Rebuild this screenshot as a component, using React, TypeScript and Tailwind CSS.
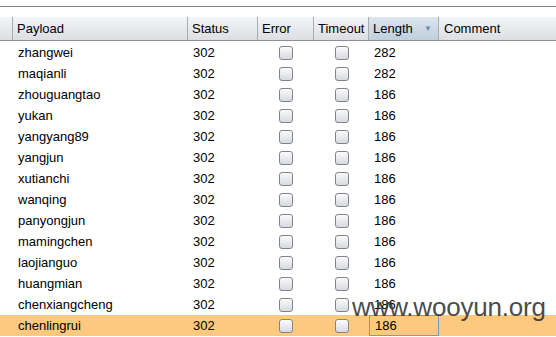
const rows: [string, string][] = [
  ['zhangwei', '282'],
  ['maqianli', '282'],
  ['zhouguangtao', '186'],
  ['yukan', '186'],
  ['yangyang89', '186'],
  ['yangjun', '186'],
  ['xutianchi', '186'],
  ['wanqing', '186'],
  ['panyongjun', '186'],
  ['mamingchen', '186'],
  ['laojianguo', '186'],
  ['huangmian', '186'],
  ['chenxiangcheng', '186'],
  ['chenlingrui', '186'],
];

function Box() {
  return (
    <span className="block w-[14px] h-[14px] rounded-[3px] border border-[#7f848b] bg-gradient-to-b from-[#fbfbfb] to-[#d8dadf]" />
  );
}

export default function App() {
  return (
    <div className="relative w-[556px] h-[337px] overflow-hidden bg-white text-[13px] text-black font-['Liberation_Sans',Arial,sans-serif]">
      <div className="h-[6px]" />
      <div className="h-px bg-[#808080]" />
      <div className="h-[10px]" />

      {/* header */}
      <div className="flex h-[24px] border-b border-[#8d8f94] bg-gradient-to-b from-[#f4f5f7] to-[#dcdee3]">
        <div className="w-[13px] border-r border-[#a9acb1]" />
        <div className="w-[175px] border-r border-[#a9acb1] pl-[4px] flex items-center">Payload</div>
        <div className="w-[70px] border-r border-[#a9acb1] pl-[4px] flex items-center">Status</div>
        <div className="w-[56px] border-r border-[#a9acb1] pl-[4px] flex items-center">Error</div>
        <div className="w-[55px] border-r border-[#a9acb1] pl-[4px] flex items-center">Timeout</div>
        <div className="w-[70px] border-r border-[#a9acb1] pl-[4px] pr-[6px] flex items-center justify-between bg-gradient-to-b from-[#dbe6f0] to-[#bfcfdd]">
          <span>Length</span>
          <span className="text-[8px] text-[#6f8dab]">▼</span>
        </div>
        <div className="flex-1 pl-[5px] flex items-center">Comment</div>
      </div>

      {/* body */}
      <div className="pt-[1px]">
        {rows.map(([name, len], i) => {
          const sel = i === rows.length - 1;
          return (
            <div key={name} className={`flex h-[21px] items-center ${sel ? 'bg-[#fdc97f]' : ''}`}>
              <div className="w-[13px]" />
              <div className="w-[175px] pl-[5px]">{name}</div>
              <div className="w-[70px] pl-[5px]">302</div>
              <div className="w-[56px] flex justify-center">
                <Box />
              </div>
              <div className="w-[55px] flex justify-center">
                <Box />
              </div>
              <div className={`w-[70px] h-full flex items-center pl-[5px] ${sel ? 'border border-[#7a9cc0] pl-[4px]' : ''}`}>
                {len}
              </div>
              <div className="flex-1" />
            </div>
          );
        })}
      </div>

      {/* watermark */}
      <div className="absolute left-[352px] top-[294px] text-[26px] leading-none tracking-[-0.2px] text-[#333333]/90 font-['Liberation_Sans',Arial,sans-serif]">
        www.wooyun.org
      </div>
    </div>
  );
}
